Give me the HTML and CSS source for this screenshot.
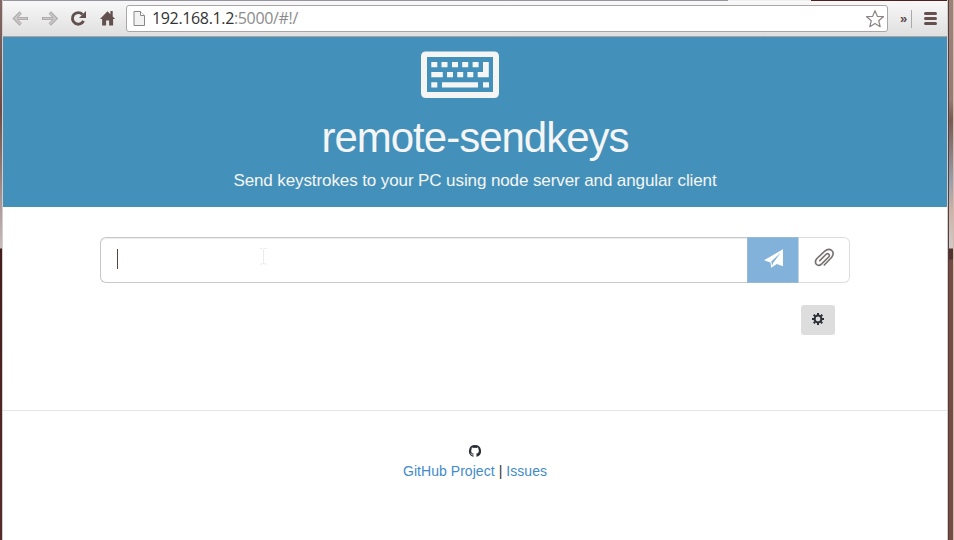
FILE: index.html
```html
<!DOCTYPE html>
<html lang="en">
<head>
<meta charset="utf-8">
<title>remote-sendkeys</title>
<link rel="stylesheet" href="styles.css">
</head>
<body>
<div class="desktop">
  <div class="edge-left"></div>
  <div class="window">
    <div class="tabstrip"><span class="tab-gap"></span><span class="tab-end"></span><span class="tab-desk"></span></div>
    <div class="toolbar">
      <svg class="tools" width="124" height="35" viewBox="3 1 124 35">
        <g fill="none" stroke="#aaa6a6" stroke-width="3.2" stroke-linejoin="miter"><path d="M28 18.5H15M20.7 12.5L14.7 18.5L20.7 24.5"/><path d="M42 18.5H55M49.8 12.5L55.8 18.5L49.8 24.5"/></g>
        <g fill="none" stroke="#c9c7c7" stroke-width="1.7"><path d="M27 18.5H15M20.500 13L15 18.5L20.500 24"/><path d="M43 18.5H55M50 13L55.500 18.5L50 24"/></g>
        <path d="M82.500 14.500A5.800 5.800 0 1 0 83.500 20.800" fill="none" stroke="#62504f" stroke-width="2.900"/><path d="M86 11v7h-7z" fill="#62504f"/>
        <path d="M100 19l7.500-7.800 2.900 3V11h2.300v5.500l2.400 2.500h-2v6.500h-4v-5h-3v5h-4V19z" fill="#62504f"/>
      </svg>
      <div class="address">
        <svg class="page-icon" width="13" height="17" viewBox="0 0 13 17"><path d="M1 1.500h6.500l4 4v10H1z" fill="#f2f2f2" stroke="#8b8888"/><path d="M7.500 1.500v4h4" fill="#fff" stroke="#8b8888"/></svg>
        <span class="url">192.168.1.2<span class="path">:5000/#!/</span></span>
        <svg class="star" width="20" height="20" viewBox="0 0 20 20"><path d="M10 1.600l2.300 5.700 6.100.4-4.700 4 1.500 6-5.200-3.300-5.200 3.300 1.500-6-4.700-4 6.100-.4z" fill="#fff" stroke="#8c8383" stroke-width="1.200" stroke-linejoin="round"/></svg>
      </div>
      <span class="more">»</span>
      <span class="separator"></span>
      <svg class="menu" width="13" height="13" viewBox="0 0 13 13"><path d="M1.500 1.500h10M1.500 6.500h10M1.500 11.500h10" stroke="#65504e" stroke-width="3" stroke-linecap="round"/></svg>
    </div>
    <header class="hero">
      <svg class="keyboard" width="78" height="47" viewBox="0 0 78 47">
        <path fill="#f5f5f5" fill-rule="evenodd" d="M5 .5H73Q78 .5 78 5.500V42Q78 47 73 47H5Q0 47 0 42V5.500Q0 .5 5 .5ZM6 6V41H72V6Z"/>
        <path fill="#f5f5f5" d="M10.300 11h6v5.300h-6zM20.500 11h6v5.300h-6zM31 11h6v5.300h-6zM41.200 11h6v5.300h-6zM51.600 11h6v5.300h-6zM62 11h5.800V26.300H56.700v-5.300H62zM10.300 21h11.500v5.300H10.300zM26 21h6v5.300h-6zM36.200 21h6v5.300h-6zM46.300 21h6v5.300h-6zM10.300 31.300h6v5.300h-6zM21 31.300h36v5.300H21zM62 31.300h6v5.300h-6z"/>
      </svg>
      <h1>remote-sendkeys</h1>
      <p>Send keystrokes to your PC using node server and angular client</p>
    </header>
    <main>
      <div class="input-group">
        <div class="field"><span class="caret"></span>
          <svg class="ibeam" width="9" height="17" viewBox="0 0 9 17"><path d="M1 .5h2.500l1 1 1-1H8M4.500 1v15M1 16h2.500l1-1 1 1H8" fill="none" stroke="#ececec"/></svg>
        </div>
        <div class="send"><svg width="20" height="20" viewBox="0 0 20 20"><path fill="#fff" d="M19 .3V17.300l-6.200-2.300-5.600 3.800-.7-5.300L0 11.300z"/><path d="M17 3.200L7.300 12.600l.8 4.300 1-3z" fill="#82b2da"/></svg></div>
        <div class="attach"><svg width="21" height="20" viewBox="0 0 21 20"><path d="M5.300 13.100L11.900 6.500Q13.600 5 14.800 6.200T14.600 9L7.700 15.800Q4.700 18.600 2.500 16.500T2.500 11L10.500 3.300Q14.500-.1 17.600 2.400T17.700 9.200L9.800 17.500" fill="none" stroke="#777070" stroke-width="1.600"/></svg></div>
      </div>
      <div class="options"><div class="settings"><svg width="12" height="12" viewBox="0 0 12 12"><circle cx="6" cy="6" r="3.400" fill="none" stroke="#2b3036" stroke-width="2"/><path d="M6 0v2M6 10v2M0 6h2M10 6h2M1.700 1.700l1.500 1.500M8.800 8.800l1.500 1.500M1.700 10.300l1.500-1.500M8.800 3.200l1.500-1.500" stroke="#2b3036" stroke-width="2"/></svg></div></div>
    </main>
    <footer>
      <svg class="github" width="12" height="12" viewBox="0 0 16 16"><path fill="#292e34" d="M8 0a8 8 0 0 0-2.500 15.600c.4.100.5-.2.500-.4v-1.500c-2 .4-2.600-.5-2.800-1-.1-.2-.5-1-.8-1.100-.3-.2-.7-.5 0-.5.600 0 1.100.600 1.200.800.700 1.200 1.900.9 2.400.7.100-.5.300-.9.500-1.100C4.700 11.300 2.900 10.600 2.900 7.600c0-.9.300-1.600.8-2.200-.1-.2-.4-1 .1-2.100 0 0 .700-.2 2.200.8a7.500 7.500 0 0 1 4 0c1.500-1 2.200-.8 2.200-.8.500 1.100.2 1.900.1 2.100.5.600.8 1.300.8 2.200 0 3-1.900 3.700-3.600 3.900.3.300.5.800.5 1.500v2.200c0 .2.100.5.500.4A8 8 0 0 0 8 0z"/></svg>
      <div class="links"><a>GitHub Project</a> | <a>Issues</a></div>
    </footer>
  </div>
  <div class="edge-right"></div>
</div>
</body>
</html>
```
FILE: styles.css
```css
* { box-sizing: border-box; }
body { margin: 0; width: 954px; height: 540px; overflow: hidden; font-family: "Liberation Sans", Arial, sans-serif; color: #333; }
svg { display: block; flex: none; }
.desktop { display: flex; height: 540px; background: #6f4b43; }
.edge-left { width: 2px; background: linear-gradient(#806864 0, #6e4a43 110px, #b8aaaa 225px, #c8bbbb 248px, #421d1c 249px, #552c2a 540px); }
.window { width: 946px; display: flex; flex-direction: column; background: #fff; border-left: 1px solid #d4cecd; border-right: 1px solid #d4cecd; }
.edge-right { width: 6px; border-left: 1px solid #533e3b; border-right: 1px solid #d5b9ad; background: linear-gradient(#9b837b 0, #967b73 100px, #785954 120px, #979eaa 180px, #c9b3aa 210px, #cfcaca 248px, #51312f 249px, #51312f 259px, #744b43 260px); }
.tabstrip { display: flex; height: 1px; }
.tab-gap { width: 725px; background: #9795a0; }
.tab-end { width: 83px; background: #eee; }
.tab-desk { flex: 1; background: #501f1f; }
.toolbar { display: flex; align-items: center; height: 36px; background: linear-gradient(#f8f8f8, #dfdfdf); border-bottom: 1px solid #a9a4a2; border-radius: 3px 3px 0 0; }
.tools { margin-right: -1px; }
.address { display: flex; align-items: center; width: 762px; height: 27px; padding: 0 2px 0 7px; background: #fff; border: 1px solid #aaa6a6; border-radius: 3px; }
.page-icon { margin-left: -1px; }
.url { flex: 1; margin-left: 6px; font: 16px/24px "Open Sans", sans-serif; letter-spacing: -.35px; color: #333; position: relative; top: -1px; }
.path { color: #8c8c8c; }
.more { width: 23px; padding-left: 12px; font: bold 13px/20px "Liberation Sans", sans-serif; color: #594746; }
.separator { width: 1px; height: 18px; background: #aaa; }
.menu { margin-left: 12px; }
.hero { height: 170px; padding-top: 14px; text-align: center; background: #4391ba; color: #f5f5f5; }
.keyboard { margin: 0 0 0 418px; }
h1 { margin: 15px 0 0; font-size: 42px; line-height: 50px; font-weight: 400; letter-spacing: -1px; }
.hero p { margin: 8px 0 0; font-size: 17px; line-height: 20px; letter-spacing: -.1px; }
main { height: 203px; padding: 30px 97px 0; }
.input-group { display: flex; height: 46px; }
.field { display: flex; width: 647px; padding: 11px 16px; border: 1px solid #c8c8c8; border-right: 0; border-radius: 6px 0 0 6px; box-shadow: inset 0 1px 1px rgba(0,0,0,.075); }
.caret { width: 1px; height: 20px; background: #574742; }
.ibeam { margin: -1px 0 0 141px; }
.send { display: flex; width: 52px; padding: 11px 0 0 16px; background: #82b2da; border: 1px solid #98bad7; border-right-color: #c5d5e2; }
.attach { display: flex; width: 51px; padding: 10px 0 0 15px; border: 1px solid #ddd; border-left: 0; border-radius: 0 6px 6px 0; }
.options { display: flex; justify-content: flex-end; padding: 22px 15px 0; }
.settings { display: flex; width: 34px; height: 30px; padding: 8px 11px; background: #ddd; border-radius: 3px; }
footer { flex: 1; border-top: 1px solid #e5e5e5; padding-top: 34px; font-size: 14px; line-height: 20px; letter-spacing: .05px; text-align: center; }
.github { margin: 0 auto; }
.links { margin-top: 4px; }
.links a { color: #428bca; }
```
